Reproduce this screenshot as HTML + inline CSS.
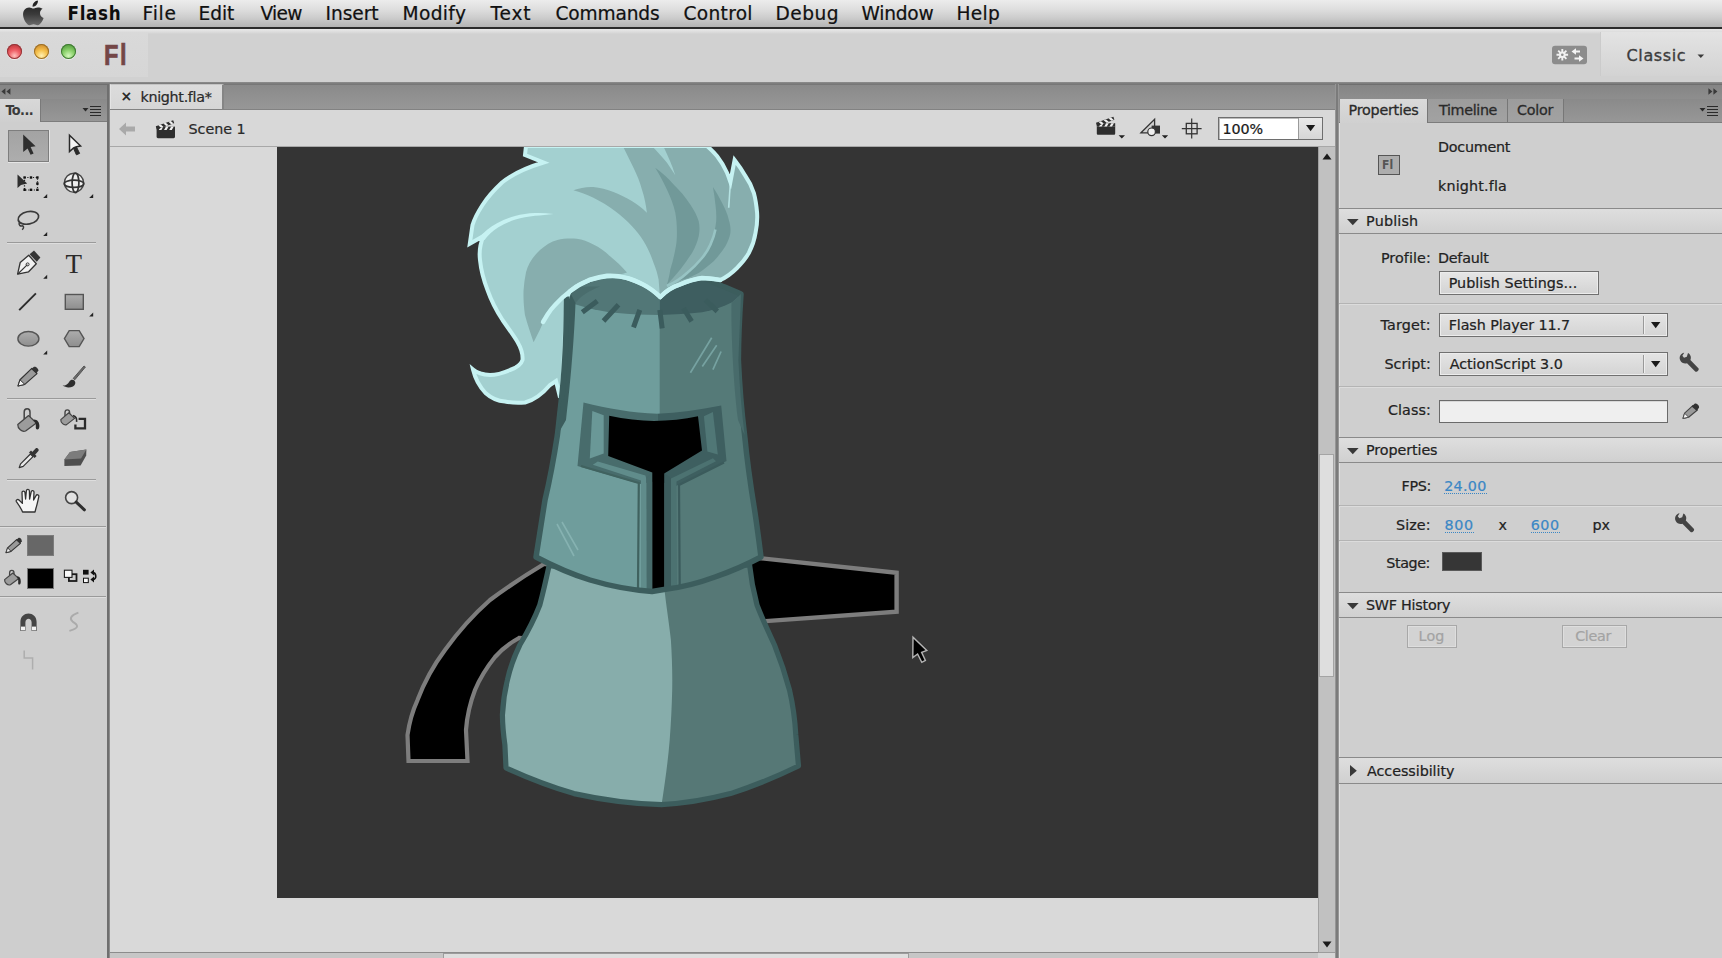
<!DOCTYPE html>
<html><head><meta charset="utf-8"><title>Flash</title>
<style>
html,body{margin:0;padding:0;}
body{width:1722px;height:958px;position:relative;overflow:hidden;background:#d0d0d0;font-family:"DejaVu Sans","Liberation Sans",sans-serif;color:#1a1a1a;}
.abs{position:absolute;}
.t{position:absolute;white-space:nowrap;}
svg{position:absolute;overflow:visible}
#menubar{left:0;top:0;width:1722px;height:27px;background:linear-gradient(#ececec 0%,#dedede 35%,#cdcdcd 65%,#b4b4b4 100%);}
#menuline{left:0;top:27px;width:1722px;height:2px;background:#2b2b2b;}
#appbar{left:0;top:29px;width:1722px;height:53px;background:linear-gradient(#e9e9e9 0,#dcdcdc 3px,#d1d1d1 5px,#d1d1d1 53px);}
#fllite{left:0;top:33px;width:148px;height:44px;background:linear-gradient(#d9d9d9,#d6d6d6);}
.tl{position:absolute;width:15px;height:15px;border-radius:50%;top:43.500px;}
#wslite{left:1600px;top:32px;width:122px;height:44px;background:linear-gradient(#e3e3e3,#d3d3d3);border-left:1px solid #cbcbcb;}
.hdrbar{position:absolute;height:15px;top:84px;background:linear-gradient(#858585,#8e8e8e);border-top:1px solid #6f6f6f;box-sizing:border-box}
.tabbar{position:absolute;background:linear-gradient(#8a8a8a,#979797);}
.sep{position:absolute;height:1px;background:#9a9a9a;box-shadow:0 1px 0 #dedede;}
.sech{position:absolute;left:1339px;width:383px;height:26px;box-sizing:border-box;border-top:1px solid #8a8a8a;border-bottom:1px solid #8a8a8a;background:linear-gradient(#dedede,#d0d0d0);}
.psep{position:absolute;left:1339px;width:383px;height:1px;background:#b4b4b4;box-shadow:0 1px 0 #dcdcdc;}
.cb{position:absolute;left:1439px;width:229px;height:24px;box-sizing:border-box;border:1px solid #707070;background:linear-gradient(#e4e4e4,#d4d4d4);box-shadow:inset 0 0 0 1px #ececec;}
.cb i{position:absolute;right:23px;top:2px;width:1px;height:18px;background:#999;box-shadow:1px 0 0 #eee}
.btn{position:absolute;box-sizing:border-box;border:1px solid #707070;background:linear-gradient(#e6e6e6,#d3d3d3);box-shadow:inset 0 0 0 1px #ececec;}
.blue{background:repeating-linear-gradient(90deg,#3b87c5 0,#3b87c5 1px,transparent 1px,transparent 2px) 0 17px/100% 1px no-repeat;}
</style></head><body>


<!--MENUBAR-->
<div id="menubar" class="abs"></div><div id="menuline" class="abs"></div>
<svg style="left:22px;top:0" width="24" height="27" viewBox="0 0 24 27"><defs><linearGradient id="apg" x1="0" y1="0" x2="0" y2="1"><stop offset="0" stop-color="#1c1c1c"/><stop offset="0.550" stop-color="#3a3a3a"/><stop offset="1" stop-color="#6a6a6a"/></linearGradient></defs><path d="M15.900,0.600 C16.100,2.400 15.400,3.900 14.400,5 C13.400,6.100 11.900,6.900 10.600,6.700 C10.400,5.100 11.200,3.500 12.100,2.500 C13.100,1.400 14.700,0.700 15.900,0.600 Z M20.600,8.800 C19,9.800 18,11.300 18,13.300 C18.100,15.700 19.500,17.300 21.600,18.100 C21.100,19.600 20.400,21 19.500,22.300 C18.400,23.800 17.300,25.200 15.600,25.200 C14,25.200 13.500,24.200 11.600,24.200 C9.700,24.200 9.100,25.200 7.600,25.200 C6,25.300 4.800,23.700 3.700,22.200 C1.500,19 0,13.600 2,10.400 C3.100,8.600 5.200,7.500 7.200,7.500 C8.900,7.500 10.300,8.600 11.300,8.600 C12.300,8.600 14.100,7.400 16.200,7.500 C17.200,7.500 19.400,7.800 20.600,8.800 Z" fill="url(#apg)"/></svg>
<!--APPBAR-->
<div id="appbar" class="abs"></div>
<div id="fllite" class="abs"></div>
<div class="tl" style="left:7px;background:radial-gradient(circle at 50% 78%,#ffc2bd 0%,#f0636a 38%,#d8484e 62%,#a83238 100%);box-shadow:0 0 0 1px #93373a inset,0 1px 0 rgba(255,255,255,.55)"></div>
<div class="tl" style="left:34px;background:radial-gradient(circle at 50% 78%,#fff0b4 0%,#f6c452 38%,#e3a53a 62%,#b47a28 100%);box-shadow:0 0 0 1px #9b6f2a inset,0 1px 0 rgba(255,255,255,.55)"></div>
<div class="tl" style="left:61px;background:radial-gradient(circle at 50% 78%,#d4f7bd 0%,#8fd470 38%,#6db652 62%,#488a38 100%);box-shadow:0 0 0 1px #3f7a34 inset,0 1px 0 rgba(255,255,255,.55)"></div>
<div id="wslite" class="abs"></div>
<svg style="left:1697px;top:53.500px" width="8" height="5"><path d="M0.500 0.500h6.600l-3.300 3.600z" fill="#3a3a3a"/></svg>
<svg style="left:1551px;top:45px" width="37" height="20" viewBox="0 0 37 20"><rect x="1" y="0.800" width="35" height="18.400" rx="3" fill="#8c8c8c"/><g stroke="#f1f1f1" stroke-width="1.900" fill="none"><path d="M11.300 4v11.600M5.500 9.800h11.600M7.200 5.700l8.200 8.200M15.400 5.700l-8.200 8.200"/></g><circle cx="11.300" cy="9.800" r="3.300" fill="#f1f1f1"/><circle cx="11.300" cy="9.800" r="1.300" fill="#8c8c8c"/><path d="M20.500,6.500 L25,3.200 L25,5.500 L29,5.500 L29,7.600 L25,7.600 L25,9.800 Z M32.500,13.500 L28,10.200 L28,12.400 L23.500,12.400 L23.500,14.600 L28,14.600 L28,16.800 Z" fill="#f4f4f4"/></svg>
<div class="abs" style="left:0;top:82px;width:1722px;height:2px;background:linear-gradient(#8e8e8e,#787878)"></div>
<div class="abs" id="toolsbody" style="left:0;top:84px;width:107px;height:874px;background:#cecece"></div>
<div class="hdrbar" style="left:0;width:107px"></div>
<svg class="abs" style="left:1px;top:88px" width="10" height="7"><path d="M4.400 0.300v6.400l-4-3.200zM9.400 0.300v6.400l-4-3.200z" fill="#3a3a3a"/></svg>
<div class="tabbar" style="left:0;top:99px;width:107px;height:23px;border-bottom:1px solid #7c7c7c;box-sizing:border-box"></div>
<div class="abs" style="left:0;top:99px;width:41px;height:23px;background:linear-gradient(#d8d8d8,#cfcfcf);border-right:1px solid #7a7a7a;box-sizing:border-box"></div>
<svg class="abs" style="left:82px;top:105px" width="20" height="11"><path d="M0.5 3h6l-3 3.5z" fill="#2a2a2a"/><path d="M8 1.5h11M8 4.5h11M8 7.5h11M8 10.5h11" stroke="#2a2a2a" stroke-width="1.2"/></svg>
<div class="abs" style="left:107px;top:84px;width:3px;height:874px;background:linear-gradient(90deg,#6f6f6f 0,#6f6f6f 1.500px,#8c8c8c 1.500px,#8c8c8c 3px)"></div>
<div class="abs" style="left:8px;top:129.500px;width:40.500px;height:32px;background:linear-gradient(#a3a3a3,#adadad);border:1.500px solid #7e7e7e;box-sizing:border-box;box-shadow:0 1px 0 #e6e6e6,1px 0 0 #e6e6e6"></div>
<div class="sep" style="left:7px;top:242px;width:89px"></div>
<div class="sep" style="left:7px;top:398px;width:89px"></div>
<div class="sep" style="left:7px;top:479px;width:89px"></div>
<div class="sep" style="left:0;top:526px;width:106px"></div>
<div class="sep" style="left:0;top:596px;width:106px"></div>
<div class="abs" style="left:27px;top:535px;width:27px;height:21px;background:#676767;border:1px solid #7c7c7c;box-sizing:border-box"></div>
<div class="abs" style="left:27px;top:567.500px;width:27px;height:21px;background:#000;border:1px solid #777;box-sizing:border-box"></div>
<!--TOOLICONS-->

<div class="tabbar" style="left:110px;top:84px;width:1225px;height:25px;border-top:1px solid #777;box-sizing:border-box"></div>
<div class="abs" style="left:110px;top:84px;width:114px;height:25px;background:linear-gradient(#dcdcdc,#d6d6d6);border-right:2px solid #858585;border-left:1px solid #e4e4e4;border-top:1px solid #c4c4c4;box-sizing:border-box"></div>
<div class="abs" style="left:110px;top:108.500px;width:1225px;height:1.500px;background:#828282"></div>
<div class="abs" style="left:110px;top:110px;width:1225px;height:36px;background:#d8d8d8;border-bottom:1px solid #a8a8a8"></div>
<svg class="abs" style="left:118px;top:121px" width="18" height="16"><path d="M1 8l7-6.5v4h9v5h-9v4z" fill="#a9a9a9"/></svg>
<!--SCENEICONS-->
<div class="abs" style="left:1218px;top:117px;width:105px;height:23px;background:#fff;border:1px solid #6e6e6e;box-sizing:border-box;box-shadow:inset 1px 1px 0 #bbb"></div>
<div class="abs" style="left:1298px;top:118px;width:24px;height:21px;background:linear-gradient(#e9e9e9,#d6d6d6);border-left:1px solid #9a9a9a;box-sizing:border-box"></div>
<svg style="left:1306.400px;top:125px" width="10" height="7"><path d="M0 0h9.200l-4.600 6.200z" fill="#1a1a1a"/></svg>

<div class="abs" style="left:110px;top:147px;width:1208px;height:806px;background:#d9d9d9"></div>
<div class="abs" style="left:277px;top:147px;width:1041px;height:751px;background:#343434"></div>
<!--ART-->
<div class="abs" style="left:1318px;top:147px;width:17px;height:811px;background:#c1c1c1;border-left:1px solid #a2a2a2;box-sizing:border-box"></div>
<div class="abs" style="left:1319px;top:454px;width:15px;height:223px;background:#dedede;border:1px solid #a4a4a4;box-sizing:border-box"></div>
<svg class="abs" style="left:1321.500px;top:153px" width="10" height="7"><path d="M0.5 6.500h9l-4.500-6z" fill="#1a1a1a"/></svg>
<svg class="abs" style="left:1321.500px;top:941px" width="10" height="7"><path d="M0.5 0.5h9l-4.500 6z" fill="#1a1a1a"/></svg>
<svg class="abs" style="left:119px;top:955px" width="6" height="4"><path d="M0 3l3-3l3 3z" fill="#333"/></svg>
<div class="abs" style="left:110px;top:952px;width:1208px;height:6px;background:#c6c6c6;border-top:1px solid #8c8c8c;box-sizing:border-box"></div>
<div class="abs" style="left:443px;top:953px;width:466px;height:16px;background:#dedede;border:1px solid #9c9c9c;box-sizing:border-box"></div>
<div class="abs" style="left:1318px;top:952px;width:17px;height:6px;background:#d6d6d6;border-top:1px solid #9c9c9c;box-sizing:border-box"></div>
<div class="abs" style="left:1335px;top:84px;width:4px;height:874px;background:#7b7b7b;border-left:1px solid #969696;border-right:1px solid #969696;box-sizing:border-box"></div>
<span class="t" style="left:103.500px;top:37.500px;font-family:'Liberation Sans',sans-serif;font-weight:bold;font-size:29.500px;line-height:34px;color:#744646;-webkit-text-stroke:0.700px #744646;letter-spacing:1.900px;transform:scaleX(0.800);transform-origin:0 0">Fl</span>
<span class="t" style="left:120.500px;top:88px;font-size:14px;line-height:17px;color:#2a2a2a;font-weight:bold">×</span>

<svg style="left:0;top:0" width="1722" height="958" viewBox="0 0 1722 958">
<defs><clipPath id="stg"><rect x="277" y="147" width="1041" height="751"/></clipPath>
<clipPath id="plm"><path id="plumeP" d="M526,146 L525,155 L543.5,162.5 C525,168 510,176 502,182.5 C494,190 487,198 482.5,205 C478,212 474,220 472.5,225 L469.800,243.800 L483.5,236 C480,244 479,252 480,260 C481,270 484,281 487.5,290 C491,300 496,310 502.5,320 C508,328 514,336 517.5,342 C521,348 523,354 522.5,360 C521,365 516,368 510,370 C503,373 496,375 490,375 C483,374.800 477,373 473,369.500 C475,378 479.500,386.500 485.500,393 C491,398 498,401 505,401.5 C512,403 519,403 525,402.5 C535,400 544,392 550,385 L556,381 L560,397.5 L563,375 L566.5,301 C568,295 569,292 570,291 C578,284 590,279.5 600,277.5 C610,275.5 619,276 627,278 C635,280.5 639,282.5 643.5,284.7 C650,288 655,292 660.2,297 C666,291 672,287 680,284.5 C688,281 695,279 702,278 C708,278 714,279 720.4,280 C728,276.5 733,272 737,268 C742,263 746,258 748.8,253 C752.5,246 754.5,240 755.5,233 C757,226 757.5,219 757.1,212.8 C756.5,206 755.5,199 753.8,192.8 C751.5,186 749,181 745.4,176 C742,170 738.5,165 734.6,160 L730.4,182 C729,178 728,175 727,172.7 C724,166 720.5,160.5 717,156 C714,152.5 710.5,149 707,146 Z"/></clipPath>
<path id="bodyP" d="M549,566 C546,580 543,593 539.8,605 C534,620 527,633 519.8,645 C514,657 510,668 507.4,680 C504.5,692 503,703 502.4,715 C502.5,725 503.5,735 504.9,745 L506,768 C528,778 551,787 574,793.6 C603,800 632,804 661.6,804.6 C685,803.5 708,799.5 730.5,793.6 C754,786 777,776.5 798.5,766 L795.8,735 C795,720 793,705 789.5,690 C785.5,675 780.5,660 774.5,645 C768,631 762,618 757,605 C753.5,592 751,579 749.6,565 Z"/><path id="helmP" d="M566.8,286 C566.5,320 566,340 564.8,360 C563,385 560.5,410 557.4,435 C554,457 550,479 545,500 C542,520 539,539 536,557 C553,566 571,574 590,580 C610,586 631,590 652,591.5 L667,589 C684,587 700,582.5 715,577 C731,571.5 746,565 761,557 C759,541 757,526 754.6,510 C750.5,485 747,460 744.6,435 C741.5,410 739.5,385 738.4,360 C738.5,338 739.5,316 741,294 C734,291 728,288 722,286 L700,276 L600,270 L566.8,286 Z"/></defs>
<g clip-path="url(#stg)">
<!-- arms -->
<path d="M544,564 C524,576 506,588 490,600 C473,615 458,632 445,650 C433,666 424,683 417.5,700 C412,712 409,724 407.5,735 L408.5,761 L467.5,761 L466,730 C467,716 470,703 475,690 C480,678 487,667 495,657 C502,649 510,643 519,638 L560,640 L580,570 Z" fill="#000" stroke="#7d7d7d" stroke-width="4.200" stroke-linejoin="miter"/>
<path d="M730,555 L896.600,572.700 L896.600,611.600 L730,623.700 Z" fill="#000" stroke="#7d7d7d" stroke-width="4.400"/>
<!-- body -->
<use href="#bodyP" fill="#87adab"/>
<path d="M664,585 C666,605 669,622 670.9,640 C672,657 672.5,673 672.2,690 C671.8,707 671,723 669.7,740 C668,761 665,782 661.6,804.6 C685,803.5 708,799.5 730.5,793.6 C754,786 777,776.5 798.5,766 L795.8,735 C795,720 793,705 789.5,690 C785.5,675 780.5,660 774.5,645 C768,631 762,618 757,605 C753.5,592 751,579 749.6,565 Z" fill="#567876"/>
<use href="#bodyP" fill="none" stroke="#3c5d5d" stroke-width="5.2" stroke-linejoin="round"/>
<!-- helmet -->
<use href="#helmP" fill="#6f9d9c"/>
<path d="M659.7,276 L659.7,470 L667,470 L667,589 C684,587 700,582.5 715,577 C731,571.5 746,565 761,557 C759,541 757,526 754.6,510 C750.5,485 747,460 744.6,435 C741.5,410 739.5,385 738.4,360 C738.5,338 739.5,316 741,294 C734,291 728,288 722,286 L700,276 L659.7,276 Z" fill="#557a78"/>
<!-- helmet top band -->
<path d="M566.8,299 L572.5,303.5 C586,308 600,311 614.8,312.8 C630,314.6 645,315 659.7,315 L659.7,276 L600,270 L566.8,286 Z" fill="#527777"/>
<path d="M566.8,290 L575.500,303 C580,297 588,291 600,286.500 C585,286 575,287 566.8,290 Z" fill="#42646480"/>
<path d="M659.7,315 C674,314.6 688,313.8 702.2,312.3 C713,310.5 723,307 732.1,302.3 L741,294.5 L722,284 L700,276 L659.7,276 Z" fill="#3e5e60"/>
<g stroke="#3b5c5d" stroke-width="5" stroke-linecap="butt">
<path d="M582.3,312.3L597.3,301M603.5,321L618.5,304.8M633.5,327.3L639.8,309.8M662.2,328.3L659.8,310M691.6,321.4L683.5,308.2M717.3,311.4L705.4,300"/></g>
<!-- scratches -->
<path d="M690.4,372.8L711.7,337.7M702.3,366.5L716.7,345.2M712.9,369.6L721.1,351.5" stroke="#76a2a1" stroke-width="1.700" fill="none"/>
<path d="M557,524L574,556M562,522L578,550" stroke="#86b2b1" stroke-width="1.600" fill="none"/>
<!-- visor frame -->
<path d="M583.5,402.500 C608,408.500 632,413 657.3,413.800 L657.3,481 L640,484 L577.500,466 Z" fill="#486c6c"/>
<path d="M657.3,413.800 C678,413 699,410 721.200,405.500 L726.500,461 L676,486 L657.3,481 Z" fill="#3e5f60"/>
<path d="M592.3,410.9 L603.7,415.3 L603.7,453.5 L589.8,458.5 Z" fill="#6a9897"/>
<path d="M703.9,416.3 L712.9,411.9 L717.8,454.5 L707.4,451.5 Z" fill="#507776"/>
<path d="M597.8,461.5 L645.4,475.4 L646.300,479 L646.5,590.5 L641,589.500 L641,480.500 L592.8,464.8 Z" fill="#608c8b"/>
<path d="M712.900,458.300 L716,461.300 L676.500,481.500 L677,586.500 L671,588 L671,478.600 Z" fill="#4c7271"/>
<path d="M638,589 L638.800,483 L581,466" fill="none" stroke="#40625f" stroke-width="2.2"/>
<path d="M679.700,586 L679,485 L724,462.500" fill="none" stroke="#3b5b5c" stroke-width="2.2"/>
<path d="M646.5,590.5 L646.300,478 L652.3,472 L652.3,591.5 Z" fill="#476b6b"/>
<path d="M664.2,473 L671,478.500 L671,588 L664.2,589.500 Z" fill="#3c5c5d"/>
<path d="M609.2,415.8 C625,419.200 640,420.800 654,421 C669,420.800 684,419.600 698,416.3 L702,450.6 L664.2,473.4 L664.2,589.500 L652.3,591.5 L652.3,472.4 L608.2,456 Z" fill="#000"/>
<use href="#helmP" fill="none" stroke="#3c5d5d" stroke-width="5.5" stroke-linejoin="round"/>
<path d="M566.8,286 L575.500,303 C574.500,330 572,370 566,420 L557.4,435 C560.5,410 563,385 564.8,360 Z" fill="#3c5d5d"/>
<path d="M741,294 L731.500,303 C731,330 733,380 738,420 L744.6,435 C741.5,410 739.5,385 738.4,360 Z" fill="#486b6b"/>
<!-- plume -->
<use href="#plumeP" fill="#a3d0d0"/>
<g clip-path="url(#plm)">
<path d="M619.8,140 L633.5,167.7 C637,175 640,182 641.9,189.4 C644.5,197 646,205 646.9,212.8 C642,208 637,204 631.8,201 C626,197.500 620,194.5 613.5,192 C607,189.500 600,187.800 593.4,187 C586.500,186.600 579.500,188 573.4,190.300 C580,192 587,194.500 593.4,197.800 C601,201.500 608,206 615,211 C621,215.500 627,220.500 631.8,226 C636.500,231 640.500,236 643.5,241 C648,248 651,255.500 653.6,263 C656,268.500 657.500,274 658.6,279.600 L660.2,300 L700,290 L730,285 L770,250 L770,140 Z" fill="#87aeae"/>
<path d="M649.500,142 L652.7,146.800 C658,152.500 662.500,157.500 667,162.700 L675.3,175.200 C673.500,170 672,165.500 670,161 C668,156 665.800,151.500 663.6,146.800 L661.500,142 Z" fill="#a3d0d0"/>
<path d="M655.2,167.700 C662,172.500 668,178 673.6,184.400 C680,190.500 685.500,197 690.3,204.500 C694,210 697,215.500 698.7,221.200 C699.800,226 699.800,231 698.7,236.200 C697.500,242 695,247.500 692,252.900 C688.500,258.500 684.500,264 680.3,269.600 C676,275 671.500,280 666.9,284.700 C668.500,280 669.500,275 670.3,269.600 C672.500,263 674,256 675.3,249.600 C676.500,244 677,238.500 676.9,232.900 C677,226 676.500,219.500 675.3,212.800 C673.500,204.500 670.500,197 666.9,189.400 C663.500,182 659.500,174.500 655.2,167.700 Z" fill="#719999"/>
<path d="M712.9,186.900 C716.500,192 719.500,197.500 722,202.800 C725,208.500 727.500,214 728.7,219.500 C730.200,224 730.800,228.500 730.4,232.900 C729.500,237.500 727.800,242 725.4,246.200 C722,251.500 718,256.500 713.7,261.300 C709,265.500 704,269.500 698.7,273 C694,275.500 689,277.800 683.6,279.600 L676.9,281.300 C681.500,278.500 686,275 690.3,271.300 C695,266.500 699.500,261.500 703.7,256.300 C707,251 709.800,245.500 712,239.500 C714,233.500 715.500,227.500 716.2,221.200 C716.500,215.500 716.200,210 715.4,204.500 C714.800,198.500 714,192.500 712.9,186.900 Z" fill="#719999"/>
<path d="M666.9,286 C674,283 681,278.500 687,273 C692.500,268.500 697.500,263.500 702,258 C705.500,254 708.200,249.500 710.4,244.600 C712.800,239.500 714.500,234.500 715.4,229.500" fill="none" stroke="#98c4c4" stroke-width="2.600"/>
<path d="M730.4,182 L728.7,207.800" fill="none" stroke="#b5e2e2" stroke-width="1.6"/>
<path d="M526,272.300 C528,264 533,256.500 540,250 C545.500,245 551,241.500 557.4,239.900 C563,238.500 570,238.300 576.7,238.700 C582.500,239.500 588,241.500 593.4,244.600 C599.500,247.500 605,251.500 610.1,256.300 C616,261 621.500,266.500 627,272.500 C621.500,274.500 616,275.200 610.1,275.500 C603,276 596.500,277.500 590,279.600 C583,282.500 576,286.500 570,291.300 C564.500,295.500 559.500,300 555,305 C552,308 549.500,311.500 547.4,314.800 C544.500,319.500 542,324.500 539.9,329.800 L533.6,342.200 C530.500,333.500 527.500,324.500 524.9,314.800 C523.800,306.500 523.200,298 523.6,289.800 C524,284 524.800,278 526,272.300 Z" fill="#87aeae"/>
</g>
<path d="M473,369.500 C479,372.500 485,374.300 490,374.800 C497,374.500 504,372.500 510,370 C515,367.500 519.500,364 522.4,360" fill="none" stroke="#c9f5f5" stroke-width="1.6"/>
<path d="M478.500,238.500 C484,232 490,227 497,223.300 C503,220 509,217.600 515,216 C521.500,214.300 528,213.300 535,213 C541,212.800 547,213.200 553.500,214 C547,214.800 541,215.200 535,215.800 C528,216.600 521.500,217.800 515.500,219.600 C509,221.700 503.500,224.200 498,227.400 C492.500,230.800 488,235 484.500,240 Z" fill="#c6f2f2"/>
<use href="#plumeP" fill="none" stroke="#c6f2f2" stroke-width="4" stroke-linejoin="miter"/>
<path d="M566.7,296.500 C566.5,320 566,340 564.8,360 C564,373 563,386 561.500,399" fill="none" stroke="#3c5d5d" stroke-width="5.6"/>
<path d="M660.2,297 C655,292 650,288 643.5,284.700 C638,282 632.500,279.500 626.8,278 C620,276 614,275.300 607,275.700 C601,276.300 595.500,277.800 590,279.600 C583,282.500 576,286.500 570,291.300 C564.500,295.500 559.500,300 555,305 C552,308 549.500,311.500 547.4,314.800 L543,322" fill="none" stroke="#c6f2f2" stroke-width="4.400" stroke-linecap="round"/>
<path d="M660.2,297 C666,291 672,287 680,284.5 C688,281 695,279 702,278 C708,278 714,279 720.4,280" fill="none" stroke="#c6f2f2" stroke-width="4.400" stroke-linecap="round"/>
</g>
</svg>

<svg style="left:0;top:0" width="110" height="700" viewBox="0 0 110 700">
<defs><linearGradient id="gfill" x1="0" y1="0" x2="0" y2="1"><stop offset="0" stop-color="#adadad"/><stop offset="1" stop-color="#8e8e8e"/></linearGradient>
<path id="fly" d="M4 0V4H0Z" fill="#222"/></defs>
<!-- selection arrow -->
<path d="M23.2,134.5 L23.2,152 L27.6,148.4 L30.6,154.8 L33.6,153.4 L30.6,147 L35.6,146.2 Z" fill="#2e2e2e"/>
<!-- subselection arrow -->
<path d="M73.200,147.600 L76.400,154.800 L79.600,153.400 L76.200,146.400 Z" fill="#2a2a2a" stroke="#2a2a2a" stroke-width="1"/>
<path d="M69.5,135.2 L69.5,151.6 L73.6,148 L76.4,146.8 L80.6,146 Z" fill="#f4f4f4" stroke="#2a2a2a" stroke-width="1.5" stroke-linejoin="miter"/>
<!-- free transform -->
<path d="M17.5,174.4 L17.5,188 L21,185 L27.2,183.4 Z" fill="#2e2e2e"/>
<rect x="24.5" y="177.500" width="13" height="12.500" fill="none" stroke="#222" stroke-width="1.2" stroke-dasharray="1.2 1.6"/>
<g fill="#111"><rect x="23.4" y="176.300" width="2.4" height="2.4"/><rect x="29.8" y="176.300" width="2.4" height="2.4"/><rect x="36.2" y="176.300" width="2.4" height="2.4"/><rect x="36.2" y="182.400" width="2.4" height="2.4"/><rect x="23.4" y="188.600" width="2.4" height="2.4"/><rect x="29.8" y="188.600" width="2.4" height="2.4"/><rect x="36.2" y="188.600" width="2.4" height="2.4"/></g>
<use href="#fly" x="43.2" y="194"/>
<!-- 3d rotate -->
<circle cx="74" cy="182.800" r="9.6" fill="#eee" stroke="#444" stroke-width="1.4"/>
<ellipse cx="74" cy="183.800" rx="9.8" ry="3.6" fill="none" stroke="#333" stroke-width="1.7"/>
<ellipse cx="75.500" cy="182.800" rx="3.4" ry="9.8" fill="none" stroke="#333" stroke-width="1.7"/>
<use href="#fly" x="89.2" y="194"/>
<!-- lasso -->
<ellipse cx="28.4" cy="217.800" rx="10.4" ry="6.2" transform="rotate(-12 28.4 217.800)" fill="none" stroke="#3a3a3a" stroke-width="1.7"/>
<path d="M19.5,222.5 C18,225 20.500,226.600 22.800,225.800 C24.200,227 23.500,228.800 22,229.600" fill="none" stroke="#3a3a3a" stroke-width="1.5"/>
<use href="#fly" x="43.2" y="232"/>
<!-- pen -->
<path d="M17.6,274.2 L20.200,262.500 L28.700,255.300 L36.300,263.800 L28.600,271.800 Z" fill="#f2f2f2" stroke="#333" stroke-width="1.3" stroke-linejoin="round"/>
<path d="M17.800,274 L27.400,264.600" stroke="#333" stroke-width="1.1"/><circle cx="27.600" cy="264.400" r="1.5" fill="none" stroke="#333" stroke-width="1"/>
<path d="M29.600,254.200 L34,250.500 L40.400,257.600 L36.800,261.800 Z" fill="#333"/>
<use href="#fly" x="43.2" y="274.8"/>
<!-- line -->
<path d="M19.200,310.200 L35.900,293.300" stroke="#2b2b2b" stroke-width="1.9"/>
<!-- rectangle -->
<rect x="65.300" y="294.500" width="18" height="14.800" fill="url(#gfill)" stroke="#555" stroke-width="1.4"/>
<use href="#fly" x="89.2" y="312.600"/>
<!-- oval -->
<ellipse cx="28.400" cy="338.800" rx="10.500" ry="7.300" fill="url(#gfill)" stroke="#555" stroke-width="1.4"/>
<use href="#fly" x="43.2" y="350.400"/>
<!-- polystar -->
<path d="M64.400,338.600 L69.200,330.600 L79.200,330.600 L84,338.600 L79.200,346.600 L69.200,346.600 Z" fill="url(#gfill)" stroke="#555" stroke-width="1.4"/>
<!-- pencil -->
<path d="M18,386 L20,379.800 L31.800,368.400 L37,373.600 L24.800,384.400 Z" fill="#9a9a9a" stroke="#333" stroke-width="1.2" stroke-linejoin="round"/>
<path d="M18,386 L20,379.800 L24.800,384.400 Z" fill="#f4f4f4" stroke="#333" stroke-width="1"/>
<path d="M31.200,369 L34,366.800 C35.500,366 38.500,368.500 38.400,370.600 L36.400,373.600 Z" fill="#333"/>
<!-- brush -->
<path d="M85.400,367 L74.800,379.800 L73.200,378.400 L84,366 Z" fill="#6a6a6a" stroke="#555" stroke-width="1"/>
<path d="M62.600,385.600 C66,385.600 68,384 69.400,381.400 C70.600,379.400 73,379 74.600,380.800 C76,382.600 75.400,385 73,386.400 C69.500,388 65.500,387.600 62.600,385.600 Z" fill="#2e2e2e"/>
<!-- paint bucket -->
<path d="M24.200,419 L24.200,412 C24.200,407.600 30,407.600 30,412 L30,420" fill="none" stroke="#444" stroke-width="1.5"/>
<path d="M17.800,424.600 L28.600,415.600 L36.400,423 L25.600,431 C22,432.600 17.600,428.400 17.800,424.600 Z" fill="#9c9c9c" stroke="#444" stroke-width="1.3" stroke-linejoin="round"/>
<path d="M34,419.600 C37.500,419.600 39.400,422.500 39.400,426 C39.400,428.500 38.500,429.400 37.400,429.400 C36.200,429.400 35.600,428.200 35.800,426.400 C36,424 35.600,422 33.400,420.800 Z" fill="#2b2b2b"/>
<!-- ink bottle -->
<path d="M65,418.400 L65,412.600 C65,409 69.600,409 69.600,412.600 L69.600,418" fill="none" stroke="#444" stroke-width="1.4"/>
<path d="M60.800,419.600 L68.800,412.800 L74.600,418.400 L66.600,424.600 C63.800,425.600 60.600,422.600 60.800,419.600 Z" fill="#9c9c9c" stroke="#444" stroke-width="1.2" stroke-linejoin="round"/>
<path d="M73,415.600 C76,416.500 77,419 76.600,421.800" fill="none" stroke="#2b2b2b" stroke-width="1.6"/>
<path d="M78.600,418.800 L85,418.800 L85,428.400 L75.400,428.400 L75.400,424.400" fill="none" stroke="#2b2b2b" stroke-width="2.3"/>
<!-- eyedropper -->
<path d="M19.200,467.600 L20.600,463.800 L30.400,454 L33,456.600 L23.200,466.400 Z" fill="#e8e8e8" stroke="#333" stroke-width="1.2" stroke-linejoin="round"/>
<path d="M29,452.400 L34.600,458 L36.600,456 L31,450.400 Z" fill="#333"/>
<path d="M31.800,452.400 L35.600,448.400 C37,447 39.600,449.600 38.400,451 L34.600,455.200 Z" fill="#333"/>
<!-- eraser -->
<path d="M64.400,459.600 L70,452 L86.400,449.400 L86.200,455.600 L80.600,465.400 L64.400,466 Z" fill="#4e4e4e"/>
<path d="M64.400,459.600 L70,452 L86.400,449.400 L81,458.600 Z" fill="#7c7c7c"/>
<!-- hand -->
<path d="M22.600,512 C21,508 18.500,504.500 16.400,501.600 C15.600,500 17.600,498.800 19,500 L22.400,503.400 L22,492.600 C22,490.600 24.800,490.600 25,492.600 L25.600,499 L26.400,490.800 C26.600,488.800 29.400,489 29.400,491 L29.600,499 L31.200,491.800 C31.600,490 34.200,490.400 34,492.400 L33.600,500 L36,495.600 C36.800,494 39.200,494.800 38.800,496.600 C37.800,501 37,505 36,508 L35,512 Z" fill="#f6f6f6" stroke="#333" stroke-width="1.3" stroke-linejoin="round"/>
<!-- zoom -->
<circle cx="71.600" cy="497.600" r="6" fill="#e2e2e2" stroke="#444" stroke-width="1.6"/>
<path d="M76.200,502.200 L84.400,509.800" stroke="#2e2e2e" stroke-width="3" stroke-linecap="round"/>
<!-- stroke color pencil -->
<path d="M6,552.600 L7.600,547.800 L16.600,539.600 L20.400,543.400 L11,551.400 Z" fill="#9a9a9a" stroke="#333" stroke-width="1.1" stroke-linejoin="round"/>
<path d="M6,552.600 L7.600,547.800 L11,551.400 Z" fill="#f4f4f4" stroke="#333" stroke-width="0.9"/>
<path d="M16.200,540 L18.400,538 C19.800,537.200 22,539.400 21.800,541.200 L20.200,543.600 Z" fill="#333"/>
<!-- fill color bucket -->
<path d="M9.600,576.400 L9.600,573 C9.600,569.600 14,569.600 14,573 L14,577" fill="none" stroke="#444" stroke-width="1.3"/>
<path d="M4.600,579.600 L12.800,573 L18.800,578.600 L10.400,584.800 C7.600,585.800 4.400,582.600 4.600,579.600 Z" fill="#9c9c9c" stroke="#444" stroke-width="1.2" stroke-linejoin="round"/>
<path d="M17.400,576.200 C19.800,576.400 20.800,578.600 20.800,581.400 C20.800,583.600 20,584.600 19.200,584.600 C18.400,584.600 18,583.600 18.200,582 C18.400,580 18,578.200 16.800,577 Z" fill="#2b2b2b"/>
<!-- black & white -->
<rect x="68.900" y="574.200" width="7.600" height="6.800" fill="none" stroke="#1a1a1a" stroke-width="1.8"/>
<rect x="64.400" y="570.200" width="7.600" height="7.200" fill="#f8f8f8" stroke="#1a1a1a" stroke-width="1.1"/>
<!-- swap -->
<rect x="83" y="569.800" width="5.600" height="4.800" fill="#111"/>
<rect x="83.500" y="578.200" width="4.800" height="4.400" fill="#fafafa" stroke="#111" stroke-width="1"/>
<path d="M92.600,572.600 C96.500,572.800 97.200,579 92.600,579.600" fill="none" stroke="#111" stroke-width="1.6"/>
<path d="M90.400,572.600 L94,569.600 L94,575.600 Z M90.400,579.600 L94,576.600 L94,582.600 Z" fill="#111"/>
<!-- magnet -->
<path d="M20.400,631 L20.400,622 C20.400,610.500 36.600,610.500 36.600,622 L36.600,631 L31.600,631 L31.600,622.400 C31.600,617.600 25.400,617.600 25.400,622.400 L25.400,631 Z" fill="#454545"/>
<rect x="21" y="626.600" width="4" height="3.800" fill="#f2f2f2"/><rect x="32" y="626.600" width="4" height="3.800" fill="#f2f2f2"/>
<!-- smooth S -->
<path d="M78.400,612.600 C72,614.600 68.600,618.400 72.600,621.600 C77.600,624.600 80.600,628 69.400,630.800" fill="none" stroke="#ababab" stroke-width="1.900"/>
<!-- straighten -->
<path d="M24.200,650.400 L24.200,658 L32.600,658 L32.600,669.600" fill="none" stroke="#aeaeae" stroke-width="1.5"/>
</svg>
<span class="t" style="left:65.500px;top:248.800px;font-family:'Liberation Serif',serif;font-size:27px;line-height:30px;color:#2a2a2a">T</span>
<!-- scene bar icons -->
<svg style="left:0;top:0" width="1340" height="150" viewBox="0 0 1340 150">
<defs><g id="clap"><path d="M1.200,10.200 L19.600,10.200 L19.600,17 C19.600,17.800 19,18.400 18.200,18.400 L2.600,18.400 C1.800,18.400 1.200,17.800 1.200,17 Z" fill="#2e2e2e"/>
<path d="M1.200,10.200 L19.600,10.200 L19.600,6.800 L1.200,6.800 Z" fill="#2e2e2e"/>
<path d="M3.400,10.200 L5.400,6.800 L8,6.800 L6,10.200 Z M8.600,10.200 L10.600,6.800 L13.200,6.800 L11.200,10.200 Z M13.800,10.200 L15.800,6.800 L18.400,6.800 L16.400,10.200 Z" fill="#f0f0f0"/>
<path d="M0.400,6.400 L17.800,0.400 L18.800,3.400 L1.400,9.600 Z" fill="#2e2e2e"/>
<path d="M3,5.600 L5.800,8 L8.200,7.200 L5.400,4.800 Z M8,3.800 L10.800,6.200 L13.200,5.400 L10.400,3 Z M13,2 L15.800,4.400 L18.200,3.600 L15.400,1.200 Z" fill="#f0f0f0"/></g></defs>
<use href="#clap" x="155.400" y="119.800"/>
<use href="#clap" x="1095.600" y="116.400"/>
<path d="M1118.600,135.200 h6.400 l-3.200,3.400 Z M1161.800,135.200 h6.400 l-3.200,3.400 Z" fill="#222"/>
<path d="M1141,132.800 L1154.600,119.200 L1154.600,132.800 Z" fill="#d0d0d0" stroke="#333" stroke-width="1.3"/>
<rect x="1151.600" y="125.600" width="8.400" height="8" fill="#333"/>
<circle cx="1151.600" cy="131.800" r="3.800" fill="#f0f0f0" stroke="#333" stroke-width="1.2"/>
<path d="M1181.800,128.600 H1201.600 M1191.700,118.600 V138.400" stroke="#333" stroke-width="1.2"/>
<rect x="1186.300" y="123.400" width="10.800" height="10.400" fill="none" stroke="#333" stroke-width="1.3"/>
</svg>

<div class="abs" style="left:1339px;top:84px;width:383px;height:874px;background:#cfcfcf;border-left:1px solid #e0e0e0;box-sizing:border-box"></div>
<div class="hdrbar" style="left:1339px;width:383px"></div>
<svg style="left:1708px;top:88px" width="10" height="7"><path d="M0.400 0.300v6.400l4-3.200zM5.400 0.300v6.400l4-3.200z" fill="#3a3a3a"/></svg>
<div class="tabbar" style="left:1339px;top:99px;width:383px;height:24px;border-bottom:1px solid #7c7c7c;box-sizing:border-box"></div>
<div class="abs" style="left:1340px;top:99px;width:88px;height:24px;background:linear-gradient(#dadada,#d0d0d0);border-right:1px solid #777;box-sizing:border-box"></div>
<div class="abs" style="left:1428px;top:99px;width:80px;height:23px;border-right:1px solid #777;box-sizing:border-box;background:linear-gradient(#9c9c9c,#a2a2a2)"></div>
<div class="abs" style="left:1508px;top:99px;width:56px;height:23px;border-right:1px solid #777;box-sizing:border-box;background:linear-gradient(#9c9c9c,#a2a2a2)"></div>
<svg class="abs" style="left:1699px;top:105px" width="20" height="11"><path d="M0.5 3h6l-3 3.5z" fill="#2a2a2a"/><path d="M8 1.5h11M8 4.5h11M8 7.5h11M8 10.5h11" stroke="#2a2a2a" stroke-width="1.2"/></svg>
<div class="abs" style="left:1378px;top:155px;width:22px;height:20px;background:#adadad;border:1px solid #555;box-sizing:border-box"></div>
<div class="sech" style="top:208px"></div>
<svg style="left:1346.500px;top:218.5px" width="12" height="7"><path d="M0 0h11.600l-5.800 6.200z" fill="#383838"/></svg>
<div class="btn" style="left:1439px;top:271px;width:160px;height:24px"></div>
<div class="psep" style="top:303px"></div>
<div class="cb" style="top:313px"><i></i></div>
<svg style="left:1650.500px;top:321.500px" width="10" height="7"><path d="M0 0h9.400l-4.700 6.200z" fill="#1a1a1a"/></svg>
<div class="cb" style="top:352px"><i></i></div>
<svg style="left:1650.500px;top:360.500px" width="10" height="7"><path d="M0 0h9.400l-4.700 6.200z" fill="#1a1a1a"/></svg>
<div class="psep" style="top:386px"></div>
<div class="abs" style="left:1439px;top:400px;width:229px;height:23px;box-sizing:border-box;border:1px solid #6a6a6a;background:#efefef;box-shadow:inset 0 1px 0 #d8d8d8"></div>
<div class="sech" style="top:437px"></div>
<svg style="left:1346.500px;top:447.5px" width="12" height="7"><path d="M0 0h11.600l-5.800 6.200z" fill="#383838"/></svg>
<div class="psep" style="top:505px"></div>
<div class="psep" style="top:540px"></div>
<div class="abs" style="left:1442px;top:552px;width:40px;height:19px;background:#363636;border:1px solid #5a5a5a;box-sizing:border-box"></div>
<div class="sech" style="top:592px"></div>
<svg style="left:1346.500px;top:602.5px" width="12" height="7"><path d="M0 0h11.600l-5.800 6.200z" fill="#383838"/></svg>
<div class="abs" style="left:1407px;top:625px;width:50px;height:23px;border:1px solid #a8a8a8;box-sizing:border-box;background:#d3d3d3;box-shadow:inset 0 0 0 1px #dedede"></div>
<div class="abs" style="left:1562px;top:625px;width:65px;height:23px;border:1px solid #a8a8a8;box-sizing:border-box;background:#d3d3d3;box-shadow:inset 0 0 0 1px #dedede"></div>
<div class="sech" style="top:757px;height:27px"></div>
<svg style="left:1349.500px;top:765px" width="8" height="12"><path d="M0 0v11.600l6.800-5.800z" fill="#383838"/></svg>
<!--PANELICONS-->

<span class="t" style="left:1382px;top:158px;font-size:12px;line-height:14px;font-weight:bold;color:#555;font-family:'DejaVu Sans Condensed','Liberation Sans',sans-serif">Fl</span>
<svg style="left:0;top:0" width="1722" height="958" viewBox="0 0 1722 958">
<defs><g id="wrench"><path d="M-2.800,-6.200 C-6.400,-5.600 -8.200,-2 -6.800,1.200 C-5.600,3.800 -2.600,5 0,4.200 L8.200,12.400 C9.600,13.800 12.800,10.800 11.400,9.200 L3.400,1 C4.600,-1.600 3.600,-4.600 1,-6 L-0.200,-2.200 L-3,-1.200 L-4.600,-3.200 Z" fill="#444"/></g></defs>
<use href="#wrench" x="1687" y="359"/>
<use href="#wrench" x="1682.400" y="519.500"/>
<path d="M1683,418.400 L1684.600,413.200 L1692.800,405.600 L1697.400,410 L1688.600,417.200 Z" fill="#9a9a9a" stroke="#444" stroke-width="1.100" stroke-linejoin="round"/>
<path d="M1683,418.400 L1684.600,413.200 L1688.600,417.200 Z" fill="#f6f6f6" stroke="#444" stroke-width="0.900"/>
<path d="M1691.600,406.600 L1694.600,403.800 C1696.400,402.800 1699.600,405.800 1699,407.800 L1696.600,410.800 Z" fill="#333"/>
</svg>

<span class="t" style='left:67.5px;top:3.8px;font-family:"DejaVu Sans Condensed","Liberation Sans",sans-serif;font-size:18.6px;line-height:20px;color:#0d0d0d;font-weight:bold;letter-spacing:0.70px;'>Flash</span>
<span class="t" style='left:142.5px;top:3.8px;font-family:"DejaVu Sans","Liberation Sans",sans-serif;font-size:18.6px;line-height:20px;color:#111;-webkit-text-stroke:0.22px #111;letter-spacing:0.80px;'>File</span>
<span class="t" style='left:198.5px;top:3.8px;font-family:"DejaVu Sans","Liberation Sans",sans-serif;font-size:18.6px;line-height:20px;color:#111;-webkit-text-stroke:0.22px #111;letter-spacing:-0.07px;'>Edit</span>
<span class="t" style='left:260.5px;top:3.8px;font-family:"DejaVu Sans","Liberation Sans",sans-serif;font-size:18.6px;line-height:20px;color:#111;-webkit-text-stroke:0.22px #111;letter-spacing:-0.73px;'>View</span>
<span class="t" style='left:325.5px;top:3.8px;font-family:"DejaVu Sans","Liberation Sans",sans-serif;font-size:18.6px;line-height:20px;color:#111;-webkit-text-stroke:0.22px #111;letter-spacing:-0.04px;'>Insert</span>
<span class="t" style='left:402.5px;top:3.8px;font-family:"DejaVu Sans","Liberation Sans",sans-serif;font-size:18.6px;line-height:20px;color:#111;-webkit-text-stroke:0.22px #111;letter-spacing:0.36px;'>Modify</span>
<span class="t" style='left:490.5px;top:3.8px;font-family:"DejaVu Sans","Liberation Sans",sans-serif;font-size:18.6px;line-height:20px;color:#111;-webkit-text-stroke:0.22px #111;letter-spacing:0.80px;'>Text</span>
<span class="t" style='left:555.5px;top:3.8px;font-family:"DejaVu Sans","Liberation Sans",sans-serif;font-size:18.6px;line-height:20px;color:#111;-webkit-text-stroke:0.22px #111;letter-spacing:-0.17px;'>Commands</span>
<span class="t" style='left:683.5px;top:3.8px;font-family:"DejaVu Sans","Liberation Sans",sans-serif;font-size:18.6px;line-height:20px;color:#111;-webkit-text-stroke:0.22px #111;letter-spacing:0.30px;'>Control</span>
<span class="t" style='left:775.5px;top:3.8px;font-family:"DejaVu Sans","Liberation Sans",sans-serif;font-size:18.6px;line-height:20px;color:#111;-webkit-text-stroke:0.22px #111;letter-spacing:0.45px;'>Debug</span>
<span class="t" style='left:861.5px;top:3.8px;font-family:"DejaVu Sans","Liberation Sans",sans-serif;font-size:18.6px;line-height:20px;color:#111;-webkit-text-stroke:0.22px #111;letter-spacing:-0.24px;'>Window</span>
<span class="t" style='left:956.5px;top:3.8px;font-family:"DejaVu Sans","Liberation Sans",sans-serif;font-size:18.6px;line-height:20px;color:#111;-webkit-text-stroke:0.22px #111;letter-spacing:0.27px;'>Help</span>
<span class="t" style='left:1626.5px;top:45.5px;font-family:"DejaVu Sans","Liberation Sans",sans-serif;font-size:16px;line-height:20px;color:#3c3c3c;-webkit-text-stroke:0.35px #3c3c3c;letter-spacing:0.63px;'>Classic</span>
<span class="t" style='left:5.5px;top:100.0px;font-family:"DejaVu Sans Condensed","Liberation Sans",sans-serif;font-size:14.3px;line-height:20px;color:#3a3a3a;font-weight:bold;letter-spacing:-0.55px;'>To...</span>
<span class="t" style='left:140.5px;top:86.5px;font-family:"DejaVu Sans","Liberation Sans",sans-serif;font-size:14.3px;line-height:20px;color:#2a2a2a;-webkit-text-stroke:0.22px #2a2a2a;letter-spacing:-0.32px;'>knight.fla*</span>
<span class="t" style='left:188.5px;top:119.0px;font-family:"DejaVu Sans","Liberation Sans",sans-serif;font-size:14.3px;line-height:20px;color:#2a2a2a;-webkit-text-stroke:0.22px #2a2a2a;letter-spacing:-0.03px;'>Scene 1</span>
<span class="t" style='left:1222.5px;top:119.0px;font-family:"DejaVu Sans","Liberation Sans",sans-serif;font-size:14.3px;line-height:20px;color:#1a1a1a;-webkit-text-stroke:0.22px #1a1a1a;letter-spacing:-0.07px;'>100%</span>
<span class="t" style='left:1348.5px;top:100.0px;font-family:"DejaVu Sans","Liberation Sans",sans-serif;font-size:14.3px;line-height:20px;color:#2a2a2a;-webkit-text-stroke:0.3px #2a2a2a;letter-spacing:-0.22px;'>Properties</span>
<span class="t" style='left:1439.0px;top:100.0px;font-family:"DejaVu Sans","Liberation Sans",sans-serif;font-size:14.3px;line-height:20px;color:#2a2a2a;-webkit-text-stroke:0.3px #2a2a2a;letter-spacing:-0.34px;'>Timeline</span>
<span class="t" style='left:1516.9px;top:100.0px;font-family:"DejaVu Sans","Liberation Sans",sans-serif;font-size:14.3px;line-height:20px;color:#2a2a2a;-webkit-text-stroke:0.3px #2a2a2a;letter-spacing:-0.23px;'>Color</span>
<span class="t" style='left:1438.0px;top:137.2px;font-family:"DejaVu Sans","Liberation Sans",sans-serif;font-size:14.3px;line-height:20px;color:#222;-webkit-text-stroke:0.22px #222;letter-spacing:-0.23px;'>Document</span>
<span class="t" style='left:1438.0px;top:175.6px;font-family:"DejaVu Sans","Liberation Sans",sans-serif;font-size:14.3px;line-height:20px;color:#222;-webkit-text-stroke:0.22px #222;letter-spacing:0.16px;'>knight.fla</span>
<span class="t" style='left:1366.1px;top:210.6px;font-family:"DejaVu Sans","Liberation Sans",sans-serif;font-size:14.3px;line-height:20px;color:#222;-webkit-text-stroke:0.22px #222;letter-spacing:0.18px;'>Publish</span>
<span class="t" style='left:1380.9px;top:247.6px;font-family:"DejaVu Sans","Liberation Sans",sans-serif;font-size:14.3px;line-height:20px;color:#222;-webkit-text-stroke:0.22px #222;letter-spacing:0.09px;'>Profile:</span>
<span class="t" style='left:1438.0px;top:247.6px;font-family:"DejaVu Sans","Liberation Sans",sans-serif;font-size:14.3px;line-height:20px;color:#222;-webkit-text-stroke:0.22px #222;letter-spacing:-0.23px;'>Default</span>
<span class="t" style='left:1448.7px;top:272.6px;font-family:"DejaVu Sans","Liberation Sans",sans-serif;font-size:14.3px;line-height:20px;color:#222;-webkit-text-stroke:0.22px #222;letter-spacing:0.04px;'>Publish Settings...</span>
<span class="t" style='left:1380.6px;top:314.7px;font-family:"DejaVu Sans","Liberation Sans",sans-serif;font-size:14.3px;line-height:20px;color:#222;-webkit-text-stroke:0.22px #222;letter-spacing:0.15px;'>Target:</span>
<span class="t" style='left:1448.7px;top:314.7px;font-family:"DejaVu Sans","Liberation Sans",sans-serif;font-size:14.3px;line-height:20px;color:#222;-webkit-text-stroke:0.22px #222;letter-spacing:-0.09px;'>Flash Player 11.7</span>
<span class="t" style='left:1384.5px;top:353.6px;font-family:"DejaVu Sans","Liberation Sans",sans-serif;font-size:14.3px;line-height:20px;color:#222;-webkit-text-stroke:0.22px #222;'>Script:</span>
<span class="t" style='left:1449.7px;top:353.6px;font-family:"DejaVu Sans","Liberation Sans",sans-serif;font-size:14.3px;line-height:20px;color:#222;-webkit-text-stroke:0.22px #222;letter-spacing:-0.03px;'>ActionScript 3.0</span>
<span class="t" style='left:1387.9px;top:400.0px;font-family:"DejaVu Sans","Liberation Sans",sans-serif;font-size:14.3px;line-height:20px;color:#222;-webkit-text-stroke:0.22px #222;letter-spacing:0.12px;'>Class:</span>
<span class="t" style='left:1366.1px;top:439.9px;font-family:"DejaVu Sans","Liberation Sans",sans-serif;font-size:14.3px;line-height:20px;color:#222;-webkit-text-stroke:0.22px #222;letter-spacing:-0.09px;'>Properties</span>
<span class="t" style='left:1401.6px;top:476.4px;font-family:"DejaVu Sans","Liberation Sans",sans-serif;font-size:14.3px;line-height:20px;color:#222;-webkit-text-stroke:0.22px #222;letter-spacing:-0.37px;'>FPS:</span>
<span class="t blue" style='left:1444.2px;top:476.4px;font-family:"DejaVu Sans","Liberation Sans",sans-serif;font-size:14.3px;line-height:20px;color:#3b87c5;-webkit-text-stroke:0.22px #3b87c5;letter-spacing:0.30px;'>24.00</span>
<span class="t" style='left:1396.0px;top:514.9px;font-family:"DejaVu Sans","Liberation Sans",sans-serif;font-size:14.3px;line-height:20px;color:#222;-webkit-text-stroke:0.22px #222;letter-spacing:0.07px;'>Size:</span>
<span class="t blue" style='left:1444.6px;top:514.9px;font-family:"DejaVu Sans","Liberation Sans",sans-serif;font-size:14.3px;line-height:20px;color:#3b87c5;-webkit-text-stroke:0.22px #3b87c5;letter-spacing:0.55px;'>800</span>
<span class="t" style='left:1498.5px;top:514.9px;font-family:"DejaVu Sans","Liberation Sans",sans-serif;font-size:14.3px;line-height:20px;color:#222;-webkit-text-stroke:0.22px #222;letter-spacing:0.20px;'>x</span>
<span class="t blue" style='left:1530.7px;top:514.9px;font-family:"DejaVu Sans","Liberation Sans",sans-serif;font-size:14.3px;line-height:20px;color:#3b87c5;-webkit-text-stroke:0.22px #3b87c5;letter-spacing:0.55px;'>600</span>
<span class="t" style='left:1592.5px;top:514.9px;font-family:"DejaVu Sans","Liberation Sans",sans-serif;font-size:14.3px;line-height:20px;color:#222;-webkit-text-stroke:0.22px #222;'>px</span>
<span class="t" style='left:1386.3px;top:552.8px;font-family:"DejaVu Sans","Liberation Sans",sans-serif;font-size:14.3px;line-height:20px;color:#222;-webkit-text-stroke:0.22px #222;letter-spacing:-0.40px;'>Stage:</span>
<span class="t" style='left:1366.0px;top:594.8px;font-family:"DejaVu Sans","Liberation Sans",sans-serif;font-size:14.3px;line-height:20px;color:#222;-webkit-text-stroke:0.22px #222;letter-spacing:-0.23px;'>SWF History</span>
<span class="t" style='left:1418.6px;top:626.1px;font-family:"DejaVu Sans","Liberation Sans",sans-serif;font-size:14.3px;line-height:20px;color:#a3a3a3;-webkit-text-stroke:0.22px #a3a3a3;letter-spacing:0.10px;'>Log</span>
<span class="t" style='left:1575.2px;top:626.1px;font-family:"DejaVu Sans","Liberation Sans",sans-serif;font-size:14.3px;line-height:20px;color:#a3a3a3;-webkit-text-stroke:0.22px #a3a3a3;letter-spacing:-0.30px;'>Clear</span>
<span class="t" style='left:1367.0px;top:760.8px;font-family:"DejaVu Sans","Liberation Sans",sans-serif;font-size:14.3px;line-height:20px;color:#222;-webkit-text-stroke:0.22px #222;letter-spacing:-0.04px;'>Accessibility</span>
<svg style="left:0;top:0" width="1722" height="958" viewBox="0 0 1722 958">
<path d="M913,637.200 L912.800,657.600 L917.600,654 L921.800,662.400 L925.400,660.400 L921.600,652.400 L926.800,650.400 Z" fill="#000" stroke="#b4b4b4" stroke-width="1.400" stroke-linejoin="miter"/>
</svg>

</body></html>
